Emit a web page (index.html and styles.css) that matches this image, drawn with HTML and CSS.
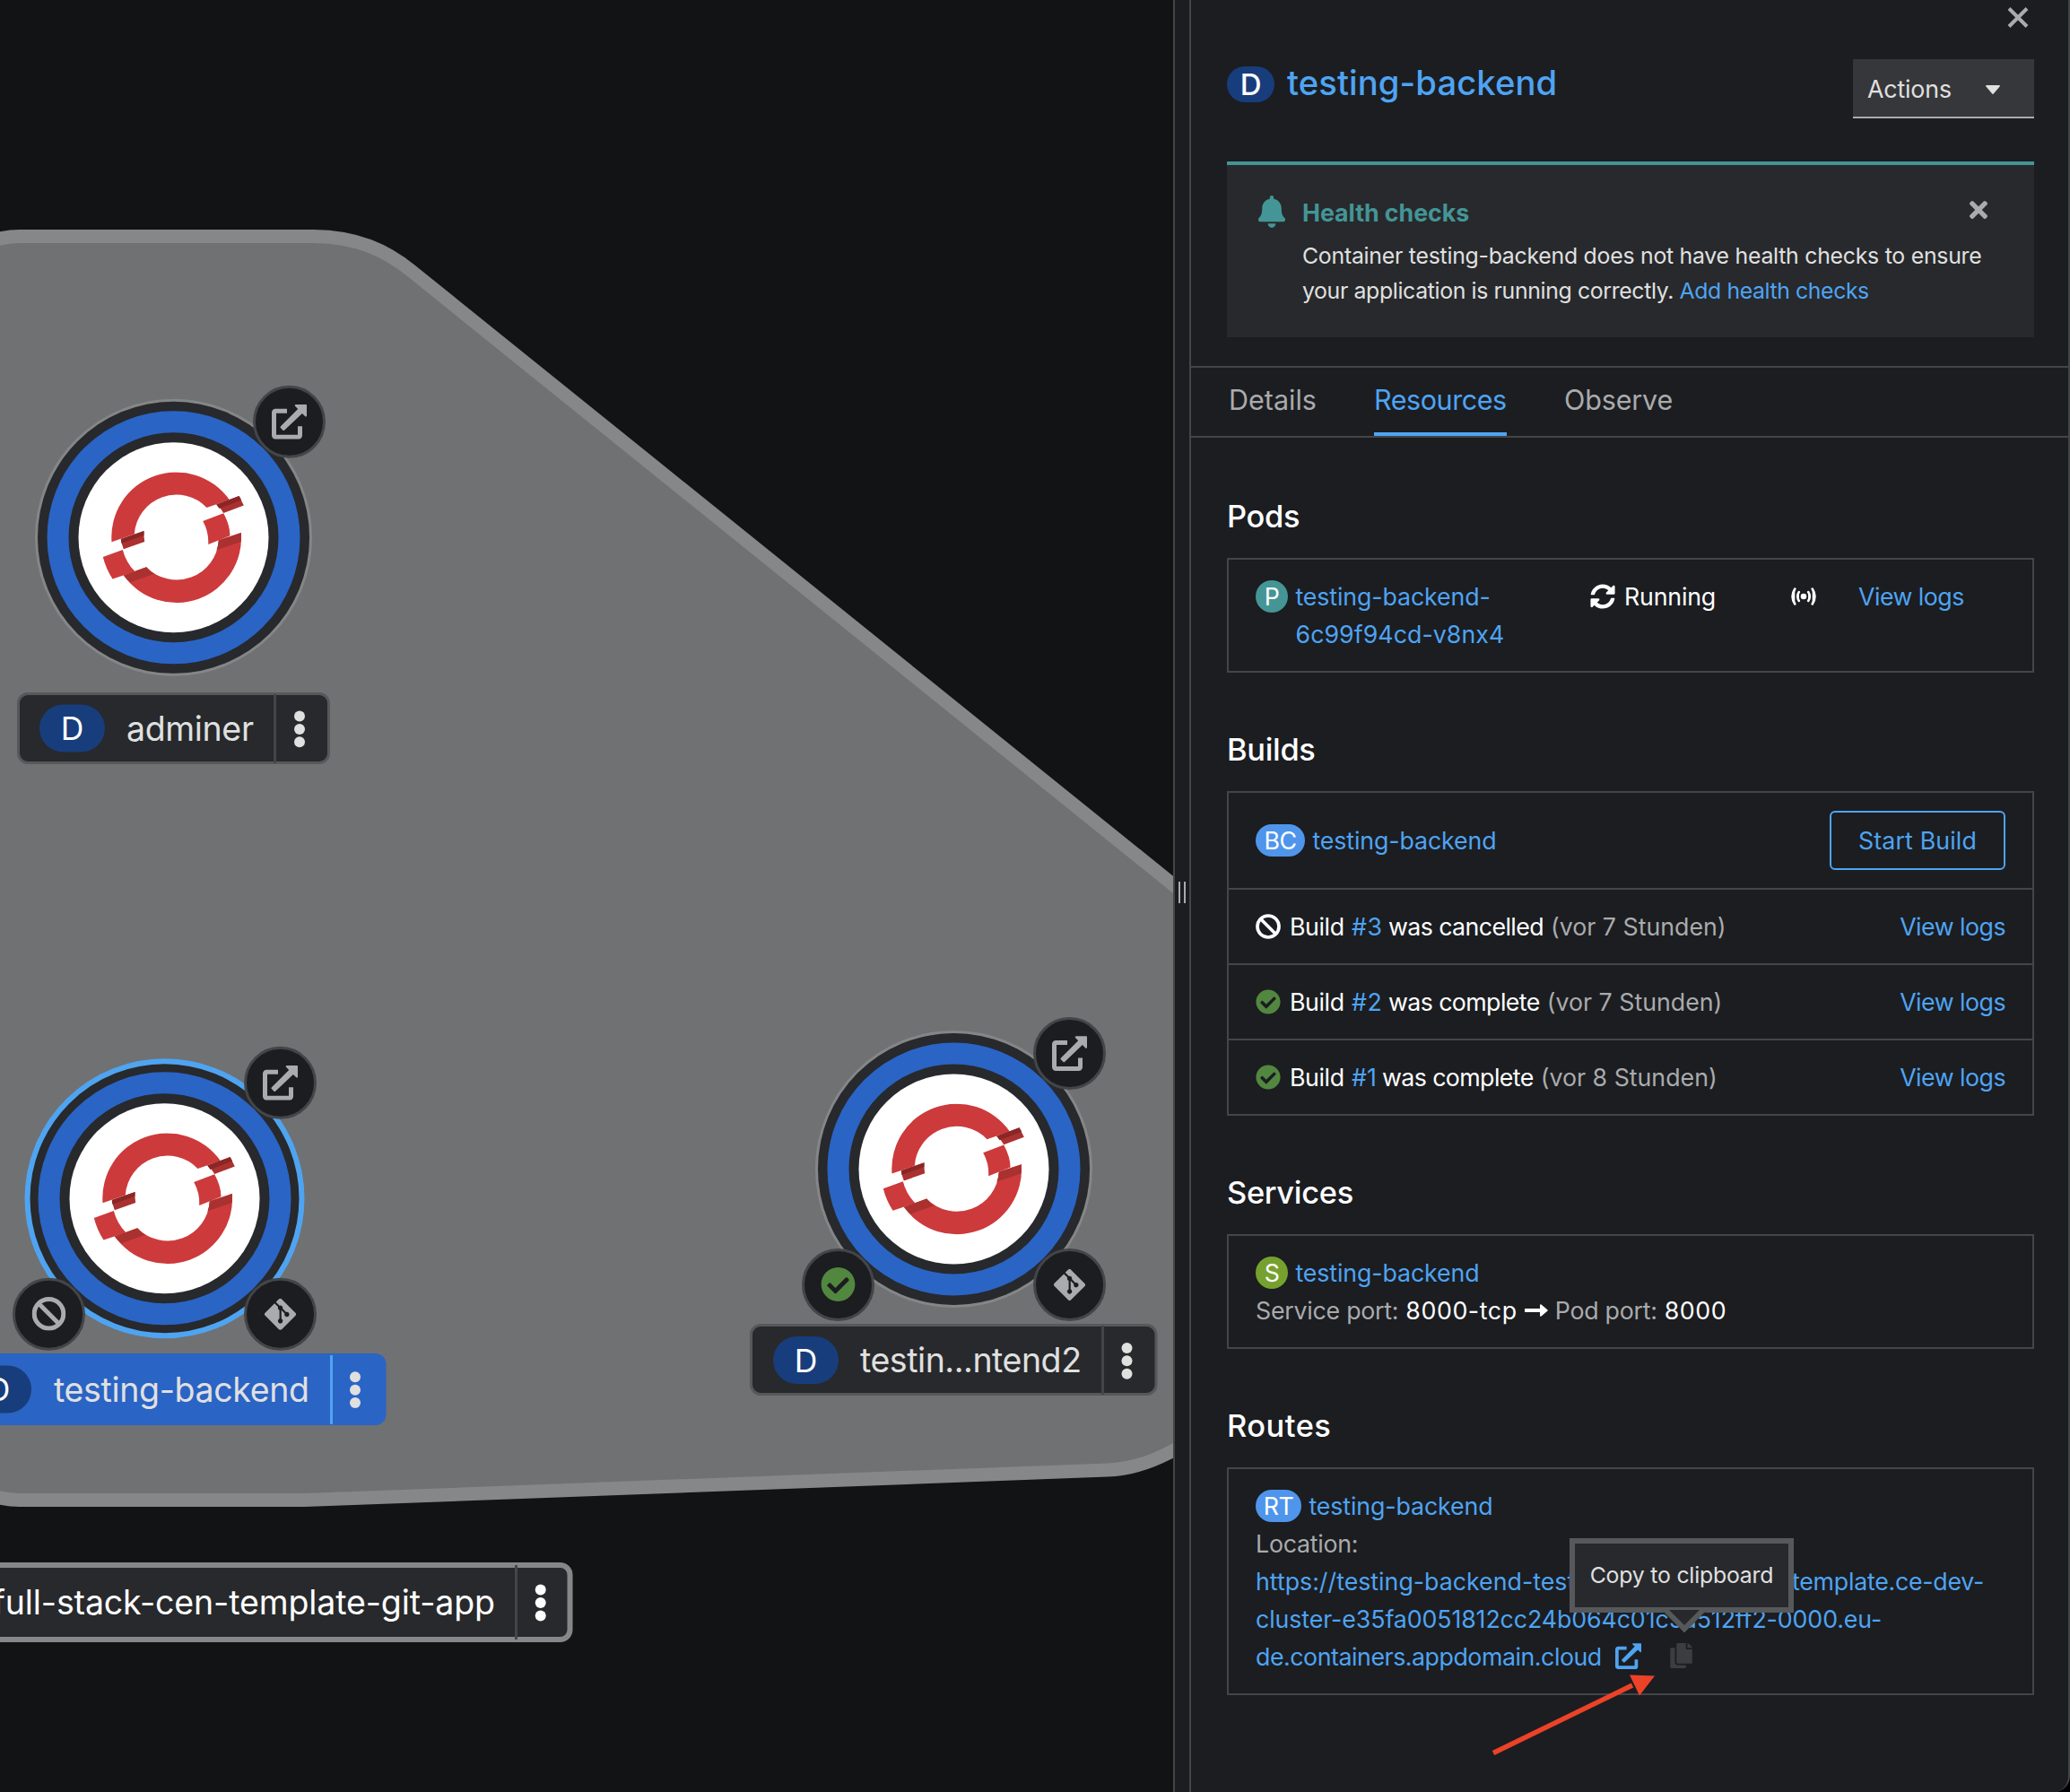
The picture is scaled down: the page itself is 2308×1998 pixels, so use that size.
FILE: index.html
```html
<!DOCTYPE html>
<html lang="en">
<head>
<meta charset="utf-8">
<title>Topology</title>
<link rel="stylesheet" href="styles.css">
</head>
<body>
<svg class="sprite" aria-hidden="true">
  <symbol id="times" viewBox="0 80 352 352"><path d="M242.72 256l100.07-100.07c12.28-12.28 12.28-32.19 0-44.48l-22.24-22.24c-12.28-12.28-32.19-12.28-44.48 0L176 189.28 75.93 89.21c-12.28-12.28-32.19-12.28-44.48 0L9.21 111.45c-12.28 12.28-12.28 32.19 0 44.48L109.28 256 9.21 356.07c-12.28 12.28-12.28 32.19 0 44.48l22.24 22.24c12.28 12.28 32.2 12.28 44.48 0L176 322.72l100.07 100.07c12.28 12.28 32.2 12.28 44.48 0l22.24-22.24c12.28-12.28 12.28-32.19 0-44.48L242.72 256z"/></symbol>
  <symbol id="check" viewBox="0 0 512 512"><path d="M504 256c0 136.967-111.033 248-248 248S8 392.967 8 256 119.033 8 256 8s248 111.033 248 248zM227.314 387.314l184-184c6.248-6.248 6.248-16.379 0-22.627l-22.627-22.627c-6.248-6.249-16.379-6.249-22.628 0L216 308.118l-70.059-70.059c-6.248-6.248-16.379-6.248-22.628 0l-22.627 22.627c-6.248 6.248-6.248 16.379 0 22.627l104 104c6.249 6.249 16.379 6.249 22.628.001z"/></symbol>
  <symbol id="ban" viewBox="0 0 38 38"><g fill="none" stroke="currentColor" stroke-width="5"><circle cx="19" cy="19" r="16.3"/><path d="M7.5 7.500L30.500 30.500"/></g></symbol>
  <symbol id="sync" viewBox="0 0 512 512"><path d="M370.72 133.28C339.458 104.008 298.888 87.962 255.848 88c-77.458.068-144.328 53.178-162.791 126.850-1.344 5.363-6.122 9.150-11.651 9.150H24.103c-7.498 0-13.194-6.807-11.807-14.176C33.933 94.924 134.813 8 256 8c66.448 0 126.791 26.136 171.315 68.685L463.030 40.970C478.149 25.851 504 36.559 504 57.941V192c0 13.255-10.745 24-24 24H345.941c-21.382 0-32.090-25.851-16.971-40.971l41.750-41.749zM32 296h134.059c21.382 0 32.090 25.851 16.971 40.971l-41.750 41.750c31.262 29.273 71.835 45.319 114.876 45.280 77.418-.070 144.315-53.144 162.787-126.849 1.344-5.363 6.122-9.150 11.651-9.150h57.304c7.498 0 13.194 6.807 11.807 14.176C478.067 417.076 377.187 504 256 504c-66.448 0-126.791-26.136-171.315-68.685L48.970 471.030C33.851 486.149 8 475.441 8 454.059V320c0-13.255 10.745-24 24-24z"/></symbol>
  <symbol id="git" viewBox="0 32 448 448"><path d="M439.550 236.050L244 40.450a28.870 28.870 0 0 0-40.810 0l-40.660 40.630 51.520 51.520c27.060-9.140 52.680 16.770 43.390 43.680l49.660 49.660c34.230-11.800 61.180 31 35.470 56.690-26.490 26.490-70.210-2.870-56-37.340L240.220 199v121.850c25.300 12.540 22.260 41.850 9.080 55a34.340 34.340 0 0 1-48.550 0c-17.570-17.600-11.070-46.910 11.250-56v-123c-20.800-8.510-24.600-30.740-18.640-45L142.570 101 8.450 235.140a28.860 28.860 0 0 0 0 40.810l195.610 195.600a28.860 28.860 0 0 0 40.800 0l194.690-194.690a28.860 28.860 0 0 0 0-40.810z"/></symbol>
  <symbol id="copy" viewBox="0 0 448 512"><path d="M320 448v40c0 13.255-10.745 24-24 24H24c-13.255 0-24-10.745-24-24V120c0-13.255 10.745-24 24-24h72v296c0 30.879 25.121 56 56 56h168zm0-344V0H152c-13.255 0-24 10.745-24 24v368c0 13.255 10.745 24 24 24h272c13.255 0 24-10.745 24-24V128H344c-13.200 0-24-10.800-24-24zm120.971-31.029L375.029 7.029A24 24 0 0 0 358.059 0H352v96h96v-6.059a24 24 0 0 0-7.029-16.970z"/></symbol>
  <symbol id="external" viewBox="0 0 39 39"><path d="M17 7.500H4.200a1.700 1.700 0 0 0-1.700 1.700V34.800a1.700 1.700 0 0 0 1.700 1.700H29.800a1.700 1.700 0 0 0 1.700-1.700V24.500" fill="none" stroke="currentColor" stroke-width="5"/><path d="M27 0.300h11c.7 0 1 .4 1 1v11.500c0 .9-1 1.300-1.700.6l-3.400-3.300L14.300 28.700c-.7.700-1.400.7-2.100 0l-2.200-2.200c-.7-.7-.7-1.400 0-2.100L29.200 5.200 26 2c-.700-.800-.200-1.700 1-1.700z"/></symbol>
  <symbol id="openshift" viewBox="-80 -73 160 146">
    <path fill="#cd3a3b" d="M-69 5A72.300 72.300 0 0 1 62.300 -42L37 -33.300A47 47 0 0 0 -43.700 -3.700z"/>
    <path fill="#a93130" d="M-58.700 1.700L-33 -7.300Q-33.300 -1 -32.300 4.700L-55.700 13Q-58 7 -58.700 1.700z"/>
    <path fill="#8a2625" d="M-58.700 1.700L-33 -7.300V-2.500L-58.200 6.500z"/>
    <path fill="#cd3a3b" d="M-78.700 21.700L-56.700 13.700Q-53 28 -43 38L-68 46.300Q-75.500 34.500 -78.700 21.700z"/>
    <path fill="#cd3a3b" d="M-55.700 42.300L-30.300 33A47 47 0 0 0 50.300 3L75.300 -5.300A72.300 72.300 0 0 1 -55.700 42.300z"/>
    <path fill="#a93130" d="M-55.700 42.300L-30.300 33Q-27 37.500 -22 40.700L-48.300 50Q-52.500 46.500 -55.700 42.300z"/>
    <path fill="#a93130" d="M50.300 3L75.300 -5.300V4.700L48 14Q50 8 50.300 3z"/>
    <path fill="#cd3a3b" d="M32.700 -18.300L55.700 -27Q63 -13.500 63 -2L38.700 7.700Q39.500 -6 32.700 -18.300z"/>
    <path fill="#a93130" d="M47.700 -36.700L73 -46.300L78.300 -35.700L55.700 -27.300Q52.500 -33 47.700 -36.700z"/>
    <path fill="#8a2625" d="M47.700 -36.700L73 -46.300L75.700 -41.700L51 -32.300z"/>
  </symbol>
  <symbol id="disk" viewBox="-160 -160 320 320">
    <circle r="151.500" fill="#27292c"/>
    <circle r="129" fill="none" stroke="#2a64c5" stroke-width="24"/>
    <circle r="106" fill="#fff"/>
    <use href="#openshift" x="-80" y="-73" width="160" height="146"/>
  </symbol>
</svg>

<div class="page">
  <main class="canvas">
    <svg class="graph" width="1308" height="1998" viewBox="0 0 1308 1998">
      <path class="hull" d="M-60 300Q-20 263.500 22 263.500H350C398 264 430 279 458 301.500L1330 1004V1605C1300 1623 1270 1638 1235 1639L340 1672.500H22Q-20 1672 -60 1640z"/>

      <g transform="translate(193.500 599.300)">
        <circle class="ring" r="153"/>
        <use href="#disk" x="-160" y="-160" width="320" height="320"/>
        <g transform="translate(129 -129)"><circle class="deco" r="39"/><use class="deco-icon" href="#external" x="-19.500" y="-19.500" width="39" height="39"/></g>
      </g>
      <g>
        <rect class="label" x="20.500" y="773.500" width="346" height="77" rx="10.500"/>
        <path class="split" d="M306.500 774V851"/>
        <rect class="kind" x="44" y="785.500" width="73" height="53" rx="26.500"/>
        <text class="kind-text" x="80.500" y="825">D</text>
        <text class="name" x="141" y="826" textLength="142">adminer</text>
        <g class="kebab"><circle cx="334" cy="798.500" r="6"/><circle cx="334" cy="813" r="6"/><circle cx="334" cy="827.300" r="6"/></g>
      </g>

      <g transform="translate(183.500 1336.300)">
        <use href="#disk" x="-160" y="-160" width="320" height="320"/>
        <circle class="ring ring-selected" r="153"/>
        <g transform="translate(129 -129)"><circle class="deco" r="39"/><use class="deco-icon" href="#external" x="-19.500" y="-19.500" width="39" height="39"/></g>
        <g transform="translate(-129 129)"><circle class="deco" r="39"/><use class="deco-icon" href="#ban" x="-19" y="-19.500" width="38" height="38"/></g>
        <g transform="translate(129 129)"><circle class="deco" r="39"/><use class="deco-icon" href="#git" x="-17.500" y="-17.500" width="35" height="35"/></g>
      </g>
      <g>
        <rect class="label-selected" x="-62" y="1509" width="492.500" height="80" rx="12"/>
        <path class="split split-selected" d="M369.500 1511V1588"/>
        <rect class="kind" x="-38" y="1522.500" width="73" height="53" rx="26.500"/>
        <text class="kind-text" x="-1.500" y="1562">D</text>
        <text class="name" x="60" y="1563" textLength="285">testing-backend</text>
        <g class="kebab"><circle cx="396" cy="1535.300" r="6"/><circle cx="396" cy="1549.700" r="6"/><circle cx="396" cy="1564" r="6"/></g>
      </g>

      <g transform="translate(1063.500 1303.500)">
        <circle class="ring" r="153"/>
        <use href="#disk" x="-160" y="-160" width="320" height="320"/>
        <g transform="translate(129 -129)"><circle class="deco" r="39"/><use class="deco-icon" href="#external" x="-19.500" y="-19.500" width="39" height="39"/></g>
        <g transform="translate(-129 129)"><circle class="deco" r="39"/><use class="done" href="#check" x="-19.500" y="-20" width="39" height="39"/></g>
        <g transform="translate(129 129)"><circle class="deco" r="39"/><use class="deco-icon" href="#git" x="-17.500" y="-17.500" width="35" height="35"/></g>
      </g>
      <g>
        <rect class="label" x="837.500" y="1477.500" width="451.500" height="77" rx="10.500"/>
        <path class="split" d="M1229.500 1478V1555"/>
        <rect class="kind" x="862" y="1490" width="73" height="53" rx="26.500"/>
        <text class="kind-text" x="898.500" y="1529.500">D</text>
        <text class="name" x="959" y="1530" textLength="247">testin...ntend2</text>
        <g class="kebab"><circle cx="1256.500" cy="1503" r="6"/><circle cx="1256.500" cy="1517.300" r="6"/><circle cx="1256.500" cy="1531.700" r="6"/></g>
      </g>

      <g>
        <rect class="group-label" x="-60" y="1745" width="695.500" height="83" rx="11"/>
        <path class="split" d="M575.500 1745V1828"/>
        <text class="name group-name" x="-8" y="1800" textLength="560">full-stack-cen-template-git-app</text>
        <g class="kebab group-kebab"><circle cx="602.700" cy="1772.500" r="6"/><circle cx="602.700" cy="1787" r="6"/><circle cx="602.700" cy="1801.500" r="6"/></g>
      </g>
    </svg>
  </main>

  <div class="splitter"><span class="grip"></span></div>

  <aside class="panel">
    <div class="topbar">
      <svg class="close" viewBox="0 0 24 23"><path d="M2 1.500L22 21.500M22 1.500L2 21.500" stroke="currentColor" stroke-width="4"/></svg>
    </div>
    <header class="head">
      <span class="badge badge-d-large">D</span>
      <h1 class="title">testing-backend</h1>
      <div class="actions"><span>Actions</span><svg class="caret" viewBox="0 0 16 10"><path d="M1 0h14q1.500 .2 .6 1.500L8.800 9.500q-.8.800-1.600 0L.4 1.500Q-.5.200 1 0z"/></svg></div>
    </header>

    <section class="alert">
      <svg class="bell" viewBox="0 0 30 36"><path d="M15 0a2.200 2.200 0 0 1 2.200 2.200v1.500c5.200 1 8.600 5.200 8.600 10.700 0 6.400 1.700 8.600 3.500 10.500 1.800 2 .5 4.300-1.600 4.300H2.300C.2 29.200-1.100 26.900.7 24.900c1.800-1.900 3.500-4.100 3.500-10.500 0-5.500 3.400-9.700 8.600-10.700V2.200A2.200 2.200 0 0 1 15 0zM10.600 31.300h8.800a4.400 4.700 0 0 1-8.800 0z"/></svg>
      <div class="alert-body">
        <div class="alert-top"><strong class="alert-title">Health checks</strong><svg class="alert-close"><use href="#times"/></svg></div>
        <p class="alert-text"><span class="line-one">Container testing-backend does not have health checks to ensure</span><br><span class="line-two">your application is running correctly. </span><a class="add">Add health checks</a></p>
      </div>
    </section>

    <nav class="tabs">
      <a class="tab tab-details">Details</a>
      <a class="tab tab-resources">Resources</a>
      <a class="tab tab-observe">Observe</a>
    </nav>

    <div class="content">
      <section class="block">
        <h2>Pods</h2>
        <div class="card pod">
          <div class="entity"><span class="badge badge-p">P</span><a class="name-link">testing-backend-<br><span class="hash">6c99f94cd-v8nx4</span></a></div>
          <div class="status"><svg class="icon"><use href="#sync"/></svg><span>Running</span></div>
          <svg class="radio" viewBox="0 0 28 20" fill="none" stroke="currentColor" stroke-width="2.600" stroke-linecap="round"><circle cx="14" cy="10" r="3.300" fill="currentColor" stroke="none"/><path d="M8.800 5Q5.600 10 8.800 15M19.200 5Q22.400 10 19.200 15M4.300 1.500Q-1.200 10 4.300 18.500M23.700 1.500Q29.200 10 23.700 18.500"/></svg>
          <a class="logs">View logs</a>
        </div>
      </section>

      <section class="block">
        <h2>Builds</h2>
        <div class="card list">
          <div class="row">
            <div class="entity"><span class="badge badge-bc">BC</span><a class="name-link">testing-backend</a></div>
            <button class="start">Start Build</button>
          </div>
          <div class="row">
            <div class="build"><svg class="icon"><use href="#ban"/></svg><span class="word">Build</span><a class="num">#3</a><span class="verb">was cancelled</span><span class="ago">(vor 7 Stunden)</span></div>
            <a class="logs">View logs</a>
          </div>
          <div class="row">
            <div class="build"><svg class="icon done"><use href="#check"/></svg><span class="word">Build</span><a class="num">#2</a><span class="verb">was complete</span><span class="ago">(vor 7 Stunden)</span></div>
            <a class="logs">View logs</a>
          </div>
          <div class="row">
            <div class="build"><svg class="icon done"><use href="#check"/></svg><span class="word">Build</span><a class="num num-one">#1</a><span class="verb">was complete</span><span class="ago">(vor 8 Stunden)</span></div>
            <a class="logs">View logs</a>
          </div>
        </div>
      </section>

      <section class="block">
        <h2>Services</h2>
        <div class="card padded">
          <div class="entity"><span class="badge badge-s">S</span><a class="name-link">testing-backend</a></div>
          <div class="ports"><span class="muted">Service port:</span><span class="port">8000-tcp</span><svg class="arrow" viewBox="0 0 26 14"><path d="M0 5h17V1.200q.2-1.700 1.500-.7l6.800 5.700q.9.800 0 1.600l-6.800 5.700q-1.300 1-1.500-.7V9H0z"/></svg><span class="muted">Pod port:</span><span class="port">8000</span></div>
        </div>
      </section>

      <section class="block">
        <h2 class="routes-title">Routes</h2>
        <div class="card padded">
          <div class="entity"><span class="badge badge-rt">RT</span><a class="name-link">testing-backend</a></div>
          <div class="muted location">Location:</div>
          <div class="url"><a><span class="host">https://testing-backend-testing-full-stack-cen-</span><span class="domain">template.ce-dev-</span></a></div>
          <div class="url url-cluster"><a>cluster-e35fa0051812cc24b064c01c5a512ff2-0000.eu-</a></div>
          <div class="url url-last"><a class="cloud">de.containers.appdomain.cloud</a><svg class="open"><use href="#external"/></svg><span class="copy"><svg class="copy-icon"><use href="#copy"/></svg><span class="tooltip">Copy to clipboard</span></span></div>
        </div>
      </section>
    </div>
  </aside>

  <svg class="pointer" viewBox="0 0 184 90"><path d="M1 86.500L156 11" stroke="#ec4227" stroke-width="5.500"/><path d="M153 -.500L181 .500L164 22.500z" fill="#ec4227"/></svg>
</div>
</body>
</html>
```
FILE: styles.css
```css
* { box-sizing: border-box; }
body {
  margin: 0;
  background: #000;
  color: #fff;
  font: 400 26.75px/42px Inter, "Liberation Sans", sans-serif;
  letter-spacing: -0.18px;
}
a { color: #4fa4f2; }
p, h1, h2 { margin: 0; }
svg { display: block; fill: currentColor; flex: none; }
.sprite { position: absolute; width: 0; height: 0; }

.page { position: relative; display: flex; width: 2308px; height: 1998px; overflow: hidden; }
.canvas { width: 1308px; background: #111314; overflow: hidden; }
.splitter {
  display: flex; align-items: center; width: 18px; padding: 0 0 8px 4px;
  background: #1b1d21; border-left: 2px solid #444548;
}
.grip { width: 8px; height: 24px; border: solid #aaabac; border-width: 0 2px; }
.panel {
  width: 982px; background: #1b1d21;
  border: solid #444548; border-width: 0 2px;
  border-bottom-right-radius: 18px;
}

.hull { fill: #707173; stroke: #868789; stroke-width: 15px; }
.ring { fill: none; stroke: #858688; stroke-width: 3px; }
.ring-selected { stroke: #4fa4f2; stroke-width: 6px; }
.deco { fill: #1b1d21; stroke: #444548; stroke-width: 3px; }
.deco-icon { color: #aaabac; fill: #aaabac; }
.done { color: #52873f; fill: #52873f; }
.label { fill: #27292c; stroke: #57585a; stroke-width: 3px; }
.label-selected { fill: #2a64c5; }
.group-label { fill: #27292c; stroke: #868789; stroke-width: 6px; }
.split { stroke: #444548; stroke-width: 3px; fill: none; }
.split-selected { stroke: #4fa4f2; }
.kind { fill: #183d7c; }
.kind-text { fill: #fff; font-size: 35.500px; text-anchor: middle; letter-spacing: 0; }
.name { fill: #e0e0e0; font-size: 37.500px; letter-spacing: 0; }
.kebab { fill: #e0e0e0; }
.group-name, .group-kebab { fill: #fff; }

.topbar { display: flex; justify-content: flex-end; padding: 8px 44px 0 0; height: 66px; }
.close { width: 24px; height: 23px; color: #aaabac; }
.head { display: flex; align-items: flex-start; padding: 0 38px 0 40px; height: 66px; }
.title { margin-left: 14px; flex: 1; font-size: 38.200px; line-height: 52px; font-weight: 500; letter-spacing: 0.100px; color: #4fa4f2; }
.actions {
  display: flex; justify-content: space-between; align-items: flex-start;
  width: 202px; height: 66px; padding: 0 38px 0 16px; line-height: 66px;
  background: #36373a; border-bottom: 2px solid #aaabac; color: #e0e0e0; letter-spacing: -0.150px;
}
.caret { width: 16px; height: 10px; margin-top: 29px; }

.badge {
  flex: none; display: inline-flex; justify-content: center; align-items: center;
  height: 36px; margin-top: 3px; border-radius: 18px; color: #fff; line-height: 36px; letter-spacing: -0.500px;
}
.badge-d-large { width: 53px; height: 40px; margin-top: 8px; border-radius: 20px; background: #183d7c; font-size: 33px; font-weight: 500; }
.badge-p { width: 36px; background: #449596; }
.badge-bc { width: 55px; background: #4f95ec; }
.badge-s { width: 36px; background: #76a12f; }
.badge-rt { width: 51px; background: #4f95ec; }

.alert {
  display: flex; height: 196px; margin: 48px 38px 0 40px; padding: 32px 0 0 35px;
  background: #27292c; border-top: 4px solid #449596;
}
.bell { width: 30px; height: 36px; margin: 2px 19px 0 0; color: #449596; }
.alert-body { flex: 1; }
.alert-top { display: flex; justify-content: space-between; padding-right: 52px; }
.alert-title { font-weight: 700; color: #449596; letter-spacing: -0.050px; }
.alert-close { width: 20px; height: 20px; margin-top: 8px; color: #aaabac; }
.alert-text { margin-top: 8px; font-size: 24.800px; line-height: 39px; color: #e0e0e0; white-space: nowrap; letter-spacing: -0.240px; }
.line-two { white-space: pre; letter-spacing: -0.350px; }
.add { letter-spacing: -0.400px; }

.tabs { display: flex; gap: 64px; height: 80px; margin-top: 32px; padding-left: 42px; border: solid #444548; border-width: 2px 0; }
.tab { height: 76px; font-size: 30.500px; line-height: 72px; color: #aaabac; letter-spacing: -0.450px; }
.tab-details { width: 98px; letter-spacing: 0; }
.tab-resources { width: 148px; color: #4fa4f2; border-bottom: 4px solid #4fa4f2; }
.tab-observe { letter-spacing: -0.150px; }

.content { display: flex; flex-direction: column; gap: 64px; padding: 66px 38px 0 40px; }
h2 { margin-bottom: 25px; font-size: 34.400px; line-height: 43px; font-weight: 500; letter-spacing: -0.300px; }
.routes-title { letter-spacing: 0.500px; }
.card { border: 2px solid #444548; }
.padded { padding: 20px 30px; }
.pod { display: grid; grid-template-columns: 373px 224px 75px auto; padding: 20px 30px; }
.entity { display: flex; }
.name-link { margin-left: 8.500px; letter-spacing: -0.120px; }
.hash { letter-spacing: 0.050px; }
.status { display: flex; gap: 10px; letter-spacing: -0.180px; }
.icon { width: 28px; height: 28px; margin-top: 7px; }
.radio { width: 28px; height: 20px; margin-top: 11px; }
.logs { letter-spacing: -0.520px; }

.row { display: flex; justify-content: space-between; align-items: center; padding: 20px 30px; }
.row + .row { border-top: 2px solid #444548; }
.start {
  width: 196px; height: 66px; padding: 0; background: none; border: 2px solid #4fa4f2; border-radius: 6px;
  color: #4fa4f2; font: inherit; letter-spacing: 0.140px;
}
.build { display: flex; }
.word { width: 69px; margin-left: 10px; letter-spacing: -0.400px; }
.num { width: 41px; letter-spacing: 0.500px; }
.num-one { width: 34px; letter-spacing: 0; }
.verb { margin-right: 8px; letter-spacing: -0.600px; }
.ago { color: #aaabac; letter-spacing: 0; }
.muted { color: #aaabac; letter-spacing: -0.250px; }
.port { letter-spacing: 0.600px; }
.ports { display: flex; gap: 8px; }
.arrow { width: 26px; height: 14px; margin-top: 14px; }

.url { height: 42px; white-space: nowrap; letter-spacing: -0.140px; }
.url-cluster { letter-spacing: -0.100px; }
.host { display: inline-block; width: 598px; letter-spacing: 0; }
.domain { letter-spacing: -0.250px; }
.url-last { display: flex; }
.cloud { width: 401px; letter-spacing: -0.460px; }
.open { width: 29px; height: 29px; margin-top: 6px; color: #4fa4f2; }
.copy { position: relative; width: 25px; height: 28px; margin: 6px 0 0 32px; color: #3c3d40; }
.copy-icon { width: 25px; height: 28px; }
.tooltip {
  position: absolute; left: -112px; bottom: 62px; width: 250px; height: 83px; padding: 16px 0;
  background: #27292c; border: 6px solid #57585a; color: #e0e0e0;
  font-size: 24.800px; line-height: 39px; text-align: center; letter-spacing: -0.200px;
}
.tooltip::after {
  content: ""; position: absolute; left: 104px; top: 56px; width: 30px; height: 30px;
  background: #27292c;
  border: solid #57585a; border-width: 0 6px 6px 0; transform: rotate(45deg);
  clip-path: polygon(100% 0, 100% 100%, 0 100%);
}
.pointer { position: absolute; left: 1664px; top: 1868px; width: 184px; height: 90px; overflow: visible; }
```
